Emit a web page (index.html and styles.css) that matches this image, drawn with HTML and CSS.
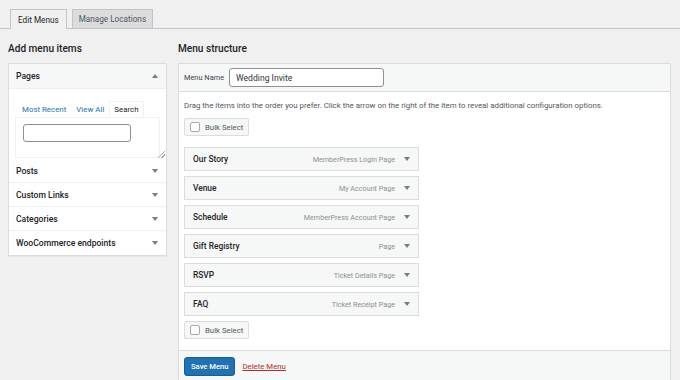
FILE: index.html
```html
<!DOCTYPE html>
<html>
<head>
<meta charset="utf-8">
<link rel="stylesheet" href="styles.css">
</head>
<body>
<div class="tabs">
  <span class="tab active">Edit Menus</span>
  <span class="tab">Manage Locations</span>
</div>
<div class="cols">
  <div class="left">
    <h2>Add menu items</h2>
    <div class="acc">
      <div class="acc-head open"><span>Pages</span><span class="arr up"></span></div>
      <div class="acc-body">
        <div class="sub-tabs">
          <span class="stab link">Most Recent</span>
          <span class="stab link">View All</span>
          <span class="stab cur">Search</span>
        </div>
        <div class="sub-panel"><div class="search-input"></div></div>
        <div class="grip"></div>
      </div>
      <div class="acc-head"><span>Posts</span><span class="arr"></span></div>
      <div class="acc-head"><span>Custom Links</span><span class="arr"></span></div>
      <div class="acc-head"><span>Categories</span><span class="arr"></span></div>
      <div class="acc-head last"><span>WooCommerce endpoints</span><span class="arr"></span></div>
    </div>
  </div>
  <div class="right">
    <h2>Menu structure</h2>
    <div class="box">
      <div class="box-head">
        <label class="mn-label">Menu Name</label>
        <div class="mn-input">Wedding Invite</div>
      </div>
      <div class="box-body">
        <p class="desc">Drag the items into the order you prefer. Click the arrow on the right of the item to reveal additional configuration options.</p>
        <div class="bulk"><span class="cb"></span>Bulk Select</div>
        <ul class="items">
          <li><span class="t">Our Story</span><span class="k">MemberPress Login Page</span><span class="arr"></span></li>
          <li><span class="t">Venue</span><span class="k">My Account Page</span><span class="arr"></span></li>
          <li><span class="t">Schedule</span><span class="k">MemberPress Account Page</span><span class="arr"></span></li>
          <li><span class="t">Gift Registry</span><span class="k">Page</span><span class="arr"></span></li>
          <li><span class="t">RSVP</span><span class="k">Ticket Details Page</span><span class="arr"></span></li>
          <li><span class="t">FAQ</span><span class="k">Ticket Receipt Page</span><span class="arr"></span></li>
        </ul>
        <div class="bulk"><span class="cb"></span>Bulk Select</div>
      </div>
      <div class="box-foot">
        <span class="save">Save Menu</span>
        <span class="del">Delete Menu</span>
      </div>
    </div>
  </div>
</div>
</body>
</html>
```
FILE: styles.css
```css
* { box-sizing: border-box; }
html, body { margin: 0; padding: 0; }
body {
  background: #f0f0f1;
  font-family: Roboto, "Noto Sans", "Liberation Sans", sans-serif;
  font-size: 9px;
  color: #1d2327;
  width: 680px;
  height: 380px;
  overflow: hidden;
}
.tabs {
  display: flex;
  gap: 5px;
  align-items: flex-end;
  margin: 9px 0 0 0;
  padding-left: 10px;
  border-bottom: 1px solid #c3c4c7;
  height: 20px;
}
.tab {
  display: flex;
  align-items: center;
  padding: 0 6px;
  height: 19px;
  font-size: 8.2px;
  font-weight: 400;
  color: #50575e;
  background: #dcdcde;
  border: 1px solid #c3c4c7;
  border-bottom: none;
}
.tab.active {
  background: #f0f0f1;
  color: #1d2327;
  height: 20px;
  margin-bottom: -1px;
  padding: 0 7px;
}
.cols {
  display: flex;
  padding-left: 8px;
  gap: 11px;
}
h2 {
  font-size: 10.1px;
  font-weight: 500;
  margin: 0;
  height: 34px;
  padding-top: 13px;
  line-height: 13px;
  color: #1d2327;
}
.left { width: 159px; }
.right { width: 493px; }
.acc {
  background: #fff;
  border: 1px solid #dcdcde;
  box-shadow: 0 1px 1px rgba(0,0,0,.04);
}
.acc-head {
  display: flex;
  justify-content: space-between;
  align-items: center;
  height: 24px;
  padding: 0 8px 0 7px;
  border-bottom: 1px solid #f0f0f1;
  font-size: 8.6px;
  font-weight: 500;
  color: #1d2327;
}
.acc-head.open { background: #f6f7f7; height: 25px; border-bottom: 1px solid #f0f0f1; }
.acc-head.last { border-bottom: none; }
.arr {
  width: 0; height: 0;
  border-left: 3px solid transparent;
  border-right: 3px solid transparent;
  border-top: 4px solid #787c82;
}
.arr.up { border-top: none; border-bottom: 4px solid #787c82; }
.acc-body {
  position: relative;
  padding: 12px 6px 1px 6px;
  height: 70px;
}
.sub-tabs {
  display: flex;
  align-items: flex-end;
  padding-left: 2px;
  height: 16px;
  gap: 0;
}
.stab { font-size: 7.9px; padding: 0 5px; line-height: 14px; white-space: nowrap; }
.stab.link { color: #2271b1; }
.stab.cur {
  color: #1d2327;
  border: 1px solid #f0f0f1;
  border-bottom: none;
  background: #fff;
  height: 16px;
  line-height: 15px;
  padding: 0 4px;
}
.sub-panel {
  border: 1px solid #f0f0f1;
  height: 41px;
  padding: 6px 7px;
}
.search-input {
  width: 108px;
  height: 18px;
  border: 1px solid #8c8f94;
  border-radius: 3px;
  background: #fff;
}
.grip {
  position: absolute;
  right: 1px; bottom: 1px;
  width: 7px; height: 7px;
  background: linear-gradient(135deg, transparent 45%, #a7aaad 45%, #a7aaad 55%, transparent 55%, transparent 70%, #a7aaad 70%, #a7aaad 80%, transparent 80%);
}
.box {
  background: #fff;
  border: 1px solid #dcdcde;
  border-bottom: none;
  height: 317px;
  overflow: hidden;
}
.box-head {
  display: flex;
  align-items: center;
  gap: 5px;
  background: #f6f7f7;
  border-bottom: 1px solid #dcdcde;
  height: 28px;
  padding-left: 5px;
}
.mn-label { font-size: 7.4px; color: #3c434a; }
.mn-input {
  width: 155px;
  height: 19px;
  border: 1px solid #8c8f94;
  border-radius: 3px;
  background: #fff;
  font-size: 8.6px;
  padding-left: 6px;
  display: flex;
  align-items: center;
  color: #2c3338;
}
.box-body { padding: 8px 5px 11px 5px; }
.desc {
  margin: 0 0 7px 0;
  font-size: 7.85px;
  line-height: 11px;
  color: #50575e;
  white-space: nowrap;
}
.bulk {
  display: inline-flex;
  align-items: center;
  gap: 5px;
  height: 18px;
  padding: 0 5px;
  background: #f6f7f7;
  border: 1px solid #dcdcde;
  border-radius: 2px;
  font-size: 7.8px;
  color: #50575e;
}
.cb {
  width: 10px; height: 10px;
  border: 1px solid #a7aaad;
  border-radius: 2px;
  background: #fff;
}
.items {
  list-style: none;
  margin: 11px 0 5px 0;
  padding: 0;
  width: 235px;
  display: flex;
  flex-direction: column;
  gap: 5px;
}
.items li {
  display: flex;
  align-items: center;
  height: 24px;
  background: #f6f7f7;
  border: 1px solid #dcdcde;
  padding: 0 8px 0 8px;
}
.items .t { font-size: 8.4px; font-weight: 500; color: #1d2327; flex: 1; }
.items .k { font-size: 7.2px; color: #8c8f94; margin-right: 9px; }
.box-foot {
  display: flex;
  gap: 7px;
  background: #f6f7f7;
  border-top: 1px solid #dcdcde;
  height: 40px;
  padding: 6px 5px 8px 5px;
  align-items: flex-start;
}
.save {
  background: #2271b1;
  color: #fff;
  border: 1px solid #135e96;
  border-radius: 3px;
  height: 19px;
  padding: 0 6px;
  font-size: 7.6px;
  font-weight: 500;
  display: flex;
  align-items: center;
}
.del {
  color: #b32d2e;
  text-decoration: underline;
  font-size: 7.8px;
  line-height: 19px;
}
```
